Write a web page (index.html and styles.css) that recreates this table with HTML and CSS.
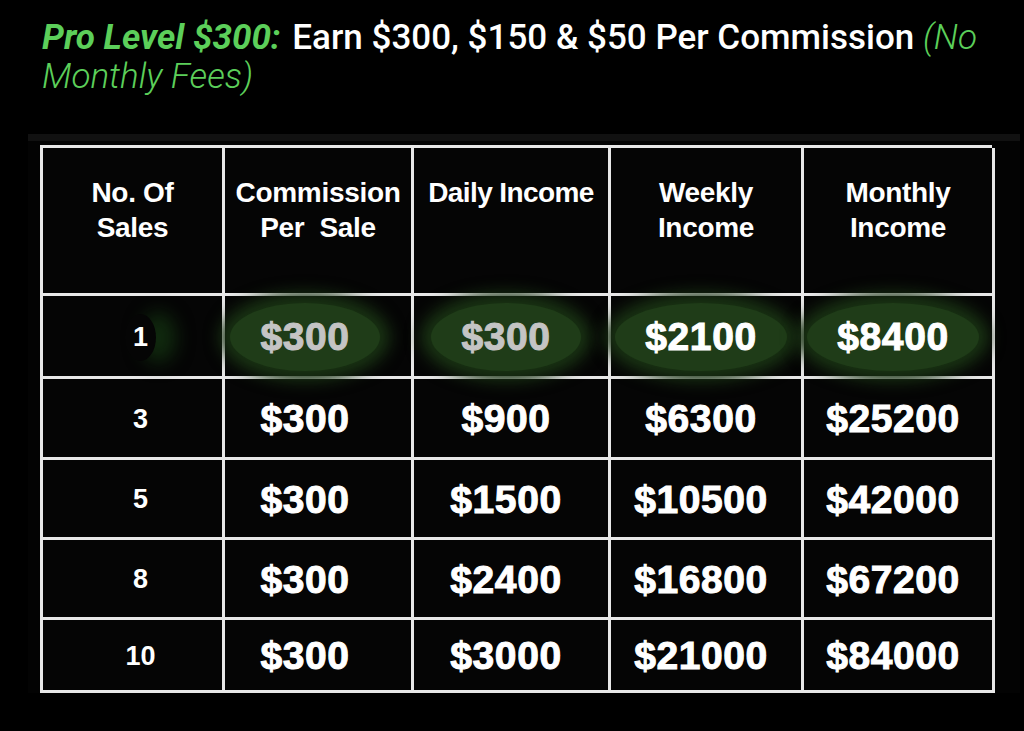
FILE: index.html
```html
<!DOCTYPE html>
<html>
<head>
<meta charset="utf-8">
<link rel="stylesheet" href="styles.css">
</head>
<body>
<div class="page">
  <h2 class="title"><em class="lvl">Pro Level $300:</em> <span class="main">Earn $300, $150 &amp; $50 Per Commission</span> <em class="note">(No</em> <em class="note">Monthly Fees)</em></h2>
  <div class="frame">
    <div class="grid">
      <div class="cell head">No. Of<br>Sales</div>
      <div class="cell head">Commission<br>Per&nbsp; Sale</div>
      <div class="cell head daily">Daily Income</div>
      <div class="cell head">Weekly<br>Income</div>
      <div class="cell head">Monthly<br>Income</div>

      <div class="cell num"><span class="g small">1</span></div>
      <div class="cell val c2"><span class="g dim">$300</span></div>
      <div class="cell val"><span class="g dim">$300</span></div>
      <div class="cell val"><span class="g">$2100</span></div>
      <div class="cell val"><span class="g">$8400</span></div>

      <div class="cell num">3</div>
      <div class="cell val c2">$300</div>
      <div class="cell val">$900</div>
      <div class="cell val">$6300</div>
      <div class="cell val">$25200</div>

      <div class="cell num">5</div>
      <div class="cell val c2">$300</div>
      <div class="cell val">$1500</div>
      <div class="cell val">$10500</div>
      <div class="cell val">$42000</div>

      <div class="cell num">8</div>
      <div class="cell val c2">$300</div>
      <div class="cell val">$2400</div>
      <div class="cell val">$16800</div>
      <div class="cell val">$67200</div>

      <div class="cell num">10</div>
      <div class="cell val c2">$300</div>
      <div class="cell val">$3000</div>
      <div class="cell val">$21000</div>
      <div class="cell val">$84000</div>
    </div>
  </div>
</div>
</body>
</html>
```
FILE: styles.css
```css
html, body {
  margin: 0;
  padding: 0;
  background: #000;
}
.page {
  width: 1024px;
  height: 731px;
  overflow: hidden;
  background: #000;
}
.title {
  margin: 0;
  padding: 18px 30px 0 42px;
  font-family: Roboto, "Liberation Sans", sans-serif;
  font-weight: 500;
  font-size: 35px;
  line-height: 39px;
  color: #fff;
  letter-spacing: 0;
}
.title em { font-style: italic; }
.lvl { color: #5ccf5a; font-weight: 700; padding-right: 3px; }
.note { color: #5ccf5a; font-weight: 300; }
.frame {
  margin: 38px 0 0 28px;
  width: 980px;
  padding: 11px 0 0 12px;
  background: linear-gradient(#111 0, #111 7px, #030303 7px);
}
.grid {
  display: grid;
  grid-template-columns: 182px 189px 197px 193px 191px;
  grid-template-rows: 148px 83px 81px 80px 80px 73px;
  width: 952px;
  border-top: 3px solid #e8e8e8;
  border-left: 3px solid #e8e8e8;
  box-sizing: border-box;
  background: #050505;
}
.cell {
  border-right: 3px solid #e8e8e8;
  border-bottom: 3px solid #e8e8e8;
  display: flex;
  align-items: center;
  justify-content: center;
  text-align: center;
  color: #fff;
  font-family: "Liberation Sans", Arial, sans-serif;
  font-weight: 700;
}
.head {
  align-items: flex-start;
  padding-top: 27px;
  font-size: 28px;
  line-height: 35px;
  letter-spacing: -0.3px;
}
.daily { letter-spacing: -0.6px; }
.num { font-size: 27px; padding-left: 16px; padding-top: 2px; }
.val {
  font-size: 39px;
  letter-spacing: 0.6px;
  -webkit-text-stroke: 1px currentColor;
  padding-top: 2px;
  padding-right: 10px;
}
.val.c2 { padding-right: 26px; }
.g {
  display: inline-block;
  padding: 12px 30px;
  border-radius: 50%;
  background: #1f3c18;
  box-shadow: 0 0 16px 10px #1a3414;
}
.g.small {
  padding: 8px 8px;
  background: transparent;
  box-shadow: 18px 0 18px 2px #112a0f;
  -webkit-text-stroke: 0;
}
.dim { color: #c4c4c4; }
```
